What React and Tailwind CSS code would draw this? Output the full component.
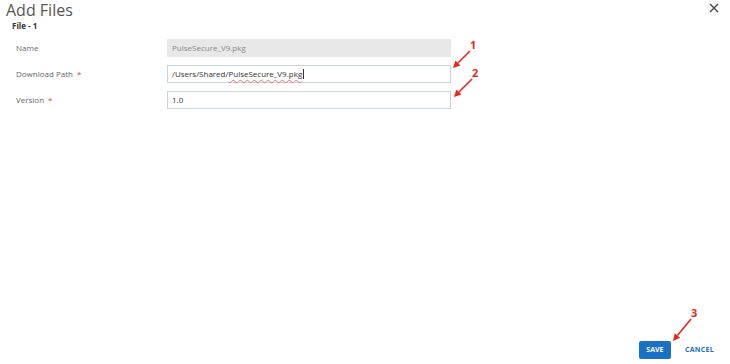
import React from 'react'

const font = { fontFamily: '"Open Sans", "Noto Sans", sans-serif' }

const Field = ({ label, required, children }) => (
    <div className="flex items-center h-[18px]">
        <div className="w-[167px] pl-4 text-[8px] text-[#666]">
            {label}
            {required && <span className="text-[#e53935] ml-1">*</span>}
        </div>
        {children}
    </div>
)

// red annotation arrow, head drawn at (x2, y2)
const Arrow = ({ n, x1, y1, x2, y2, nx, ny }) => {
    const len = Math.hypot(x2 - x1, y2 - y1)
    const dx = (x2 - x1) / len
    const dy = (y2 - y1) / len
    const bx = x2 - dx * 7
    const by = y2 - dy * 7
    const pts = `${x2},${y2} ${bx - dy * 3.5},${by + dx * 3.5} ${bx + dy * 3.5},${by - dx * 3.5}`
    return (
        <g>
            <line x1={x1} y1={y1} x2={bx} y2={by} stroke="#e8261c" strokeWidth="1.6" />
            <polygon points={pts} fill="#e8261c" />
            <text x={nx} y={ny} fill="#e8261c" fontSize="11" fontWeight="700" fontFamily="Open Sans, sans-serif">{n}</text>
        </g>
    )
}

const App = () => {
    return (
        <div className="relative w-[730px] h-[364px] bg-white flex flex-col overflow-hidden" style={font}>
            <div className="flex items-start justify-between">
                <div className="pl-[6px]">
                    <h1 className="text-[16px] leading-[18px] text-[#555] pt-[1px]">Add Files</h1>
                    <div className="pl-[6px] mt-[2px] text-[8px] font-bold text-[#333] leading-[10px]">File - 1</div>
                </div>
                <button className="mr-[10px] mt-[2px] text-[#444]">
                    <svg width="12" height="12" viewBox="0 0 12 12">
                        <path d="M2 2 L10 10 M10 2 L2 10" stroke="#444" strokeWidth="1.4" />
                    </svg>
                </button>
            </div>

            <div className="flex flex-col gap-[8px] mt-[8px]">
                <Field label="Name">
                    <div className="w-[284px] h-[18px] bg-[#e8e8e8] px-[5px] flex items-center text-[8px] text-[#888]">
                        PulseSecure_V9.pkg
                    </div>
                </Field>
                <Field label="Download Path" required>
                    <div className="w-[284px] h-[18px] border border-[#c9d3dc] px-[4px] flex items-center text-[8px] text-[#333]">
                        /Users/Shared/<span className="underline decoration-wavy decoration-[#e57373] decoration-[0.5px] underline-offset-2">PulseSecure_V9.pkg</span>
                        <span className="w-px h-[10px] bg-[#333] ml-px" />
                    </div>
                </Field>
                <Field label="Version" required>
                    <div className="w-[284px] h-[18px] border border-[#c9d3dc] px-[4px] flex items-center text-[8px] text-[#333]">
                        1.0
                    </div>
                </Field>
            </div>

            <div className="flex-1" />

            <div className="flex items-center justify-end pb-[5px] pr-[16px] gap-[14px]">
                <button className="w-[32px] h-[18px] bg-[#1a6fc6] text-white text-[7px] font-bold rounded-[2px]">
                    SAVE
                </button>
                <button className="text-[#1a6fc6] text-[7px] font-bold tracking-[0.3px]">CANCEL</button>
            </div>

            <svg className="absolute inset-0 pointer-events-none" width="730" height="364">
                <Arrow n="1" x1={470} y1={51} x2={453} y2={68} nx={470} ny={49} />
                <Arrow n="2" x1={472} y1={79} x2={454} y2={97} nx={472} ny={77} />
                <Arrow n="3" x1={691} y1={319} x2={673} y2={341} nx={691} ny={317} />
            </svg>
        </div>
    )
}

export default App
